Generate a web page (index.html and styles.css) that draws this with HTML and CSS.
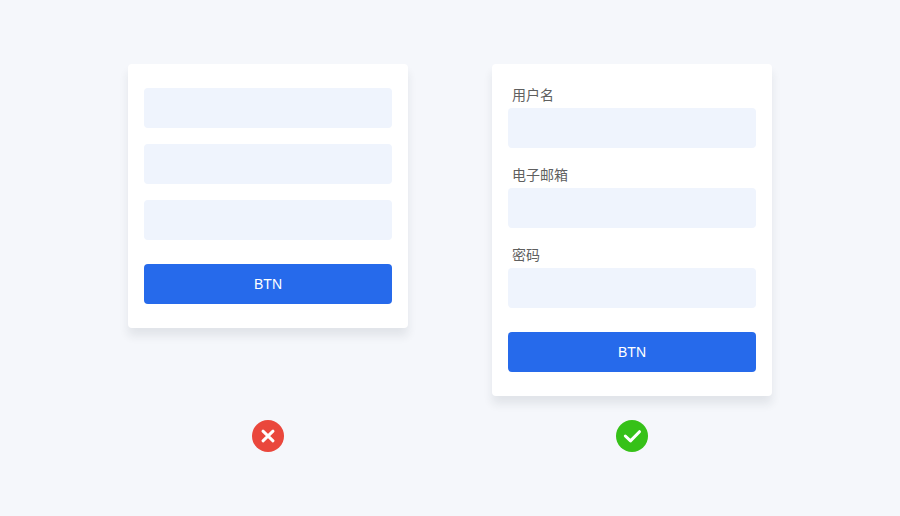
FILE: index.html
```html
<!DOCTYPE html>
<html lang="zh-CN">
<head>
    <meta charset="UTF-8">
    <meta name="viewport" content="width=device-width, initial-scale=1.0">
    <title>Form Labels</title>
    <link rel="stylesheet" href="styles.css">
</head>
<body>

<main class="examples">
    <!-- Wrong: fields without visible labels -->
    <section class="example">
        <form class="card">
            <div class="fields">
                <input class="input" type="text" aria-label="用户名">
                <input class="input" type="email" aria-label="电子邮箱">
                <input class="input" type="password" aria-label="密码">
            </div>
            <button class="btn" type="button">BTN</button>
        </form>
        <svg class="mark" viewBox="0 0 32 32" aria-hidden="true">
            <circle cx="16" cy="16" r="16" fill="#ea473c"/>
            <path d="M11 11.2l10 9.6M21 11.2l-10 9.6" fill="none" stroke="#fff" stroke-width="3" stroke-linecap="round"/>
        </svg>
    </section>

    <!-- Right: every field has a label -->
    <section class="example">
        <form class="card">
            <div class="fields labelled">
                <div class="field">
                    <label for="username">用户名</label>
                    <input class="input" id="username" type="text">
                </div>
                <div class="field">
                    <label for="email">电子邮箱</label>
                    <input class="input" id="email" type="email">
                </div>
                <div class="field">
                    <label for="password">密码</label>
                    <input class="input" id="password" type="password">
                </div>
            </div>
            <button class="btn" type="button">BTN</button>
        </form>
        <svg class="mark" viewBox="0 0 32 32" aria-hidden="true">
            <circle cx="16" cy="16" r="16" fill="#36c118"/>
            <path d="M9.3 16l5.2 4.9 9-9.2" fill="none" stroke="#fff" stroke-width="3" stroke-linecap="round" stroke-linejoin="round"/>
        </svg>
    </section>
</main>

</body>
</html>
```

FILE: styles.css
```css
* {
    box-sizing: border-box;
}
body {
    margin: 0;
    background: #f5f7fb;
    color: #5f5f5f;
    font-family: "Liberation Sans", "Noto Sans CJK SC", sans-serif;
    font-size: 14px;
}
.examples {
    display: flex;
    gap: 84px;
    padding: 64px 128px;
}
.example {
    flex: 1;
    display: flex;
    flex-direction: column;
    align-items: center;
    justify-content: space-between;
    gap: 24px;
}
.card {
    width: 100%;
    padding: 24px 16px;
    background: white;
    border-radius: 4px;
    box-shadow: 0 8px 10px rgba(30, 40, 60, 0.09);
}
.fields {
    display: flex;
    flex-direction: column;
    gap: 16px;
}
.labelled {
    gap: 20px;
}
.field {
    display: flex;
    flex-direction: column;
    gap: 6px;
}
.field label {
    padding-left: 4px;
    line-height: 14px;
}
.input {
    width: 100%;
    height: 40px;
    padding: 0 12px;
    border: none;
    border-radius: 4px;
    background: #eff4fd;
    font: inherit;
}
.btn {
    display: block;
    width: 100%;
    height: 40px;
    margin-top: 24px;
    border: none;
    border-radius: 4px;
    background: #266aeb;
    color: white;
    font: inherit;
    cursor: pointer;
}
.mark {
    width: 32px;
    height: 32px;
}
```
